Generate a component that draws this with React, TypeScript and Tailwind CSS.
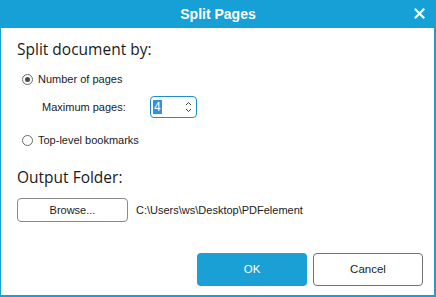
import React from "react";

export default function App() {
  return (
    <div className="w-[436px] h-[297px] bg-[#17a0d5] flex flex-col" style={{ fontFamily: "'Liberation Sans', Arial, sans-serif" }}>
      <div className="h-[28px] relative flex items-center justify-center text-white font-bold text-[14px]">
        Split Pages
        <svg className="absolute left-[414px] top-[8px]" width="11" height="11" viewBox="0 0 11 11">
          <path d="M1.5 1.5 L9.5 9.5 M9.5 1.5 L1.5 9.5" stroke="white" strokeWidth="2.2" strokeLinecap="square" />
        </svg>
      </div>
      <div className="flex-1 bg-white ml-[1px] mr-[2px] mb-[2px] flex flex-col pl-[16px] pr-[11px]">
        <div className="mt-[9px] text-[15.5px] text-[#1a1a1a] leading-[24px]" style={{ fontFamily: "'Open Sans', 'Noto Sans', sans-serif" }}>Split document by:</div>
        <div className="mt-[10px] flex items-center h-[16px] pl-[5px] text-[11px] text-[#1a1a1a]">
          <span className="w-[11px] h-[11px] rounded-full border border-[#6b6b6b] flex items-center justify-center">
            <span className="w-[5px] h-[5px] rounded-full bg-[#4a4a4a]" />
          </span>
          <span className="ml-[5px]">Number of pages</span>
        </div>
        <div className="mt-[9px] flex items-center h-[22px] pl-[25px] text-[11px] text-[#1a1a1a]">
          <span className="w-[108px]">Maximum pages:</span>
          <div className="w-[47px] h-[22px] border border-[#1d8fd0] rounded-[4px] flex items-center pl-[2px] pr-[4px]">
            <span className="bg-[#3390e0] text-white leading-[14px] px-[1px] text-[12px]">4</span>
            <span className="flex-1" />
            <svg width="7" height="12" viewBox="0 0 7 12">
              <path d="M1 4 L3.5 1.5 L6 4" stroke="#444" strokeWidth="1" fill="none" />
              <path d="M1 8 L3.5 10.5 L6 8" stroke="#444" strokeWidth="1" fill="none" />
            </svg>
          </div>
        </div>
        <div className="mt-[14px] flex items-center h-[16px] pl-[5px] text-[11px] text-[#1a1a1a]">
          <span className="w-[11px] h-[11px] rounded-full border border-[#6b6b6b]" />
          <span className="ml-[5px]">Top-level bookmarks</span>
        </div>
        <div className="mt-[17px] text-[15.5px] text-[#1a1a1a] leading-[24px]" style={{ fontFamily: "'Open Sans', 'Noto Sans', sans-serif" }}>Output Folder:</div>
        <div className="mt-[9px] flex items-center text-[11px] text-[#1a1a1a]">
          <div className="w-[111px] h-[24px] border border-[#8a8a8a] rounded-[4px] flex items-center justify-center">Browse...</div>
          <span className="ml-[8px]">C:\Users\ws\Desktop\PDFelement</span>
        </div>
        <div className="flex-1" />
        <div className="flex justify-end gap-[6px] mb-[9px] text-[11.5px]">
          <div className="w-[110px] h-[33px] bg-[#1ba0d6] rounded-[4px] flex items-center justify-center text-white">OK</div>
          <div className="w-[110px] h-[33px] border border-[#707070] rounded-[4px] flex items-center justify-center text-[#1a1a1a]">Cancel</div>
        </div>
      </div>
    </div>
  );
}
